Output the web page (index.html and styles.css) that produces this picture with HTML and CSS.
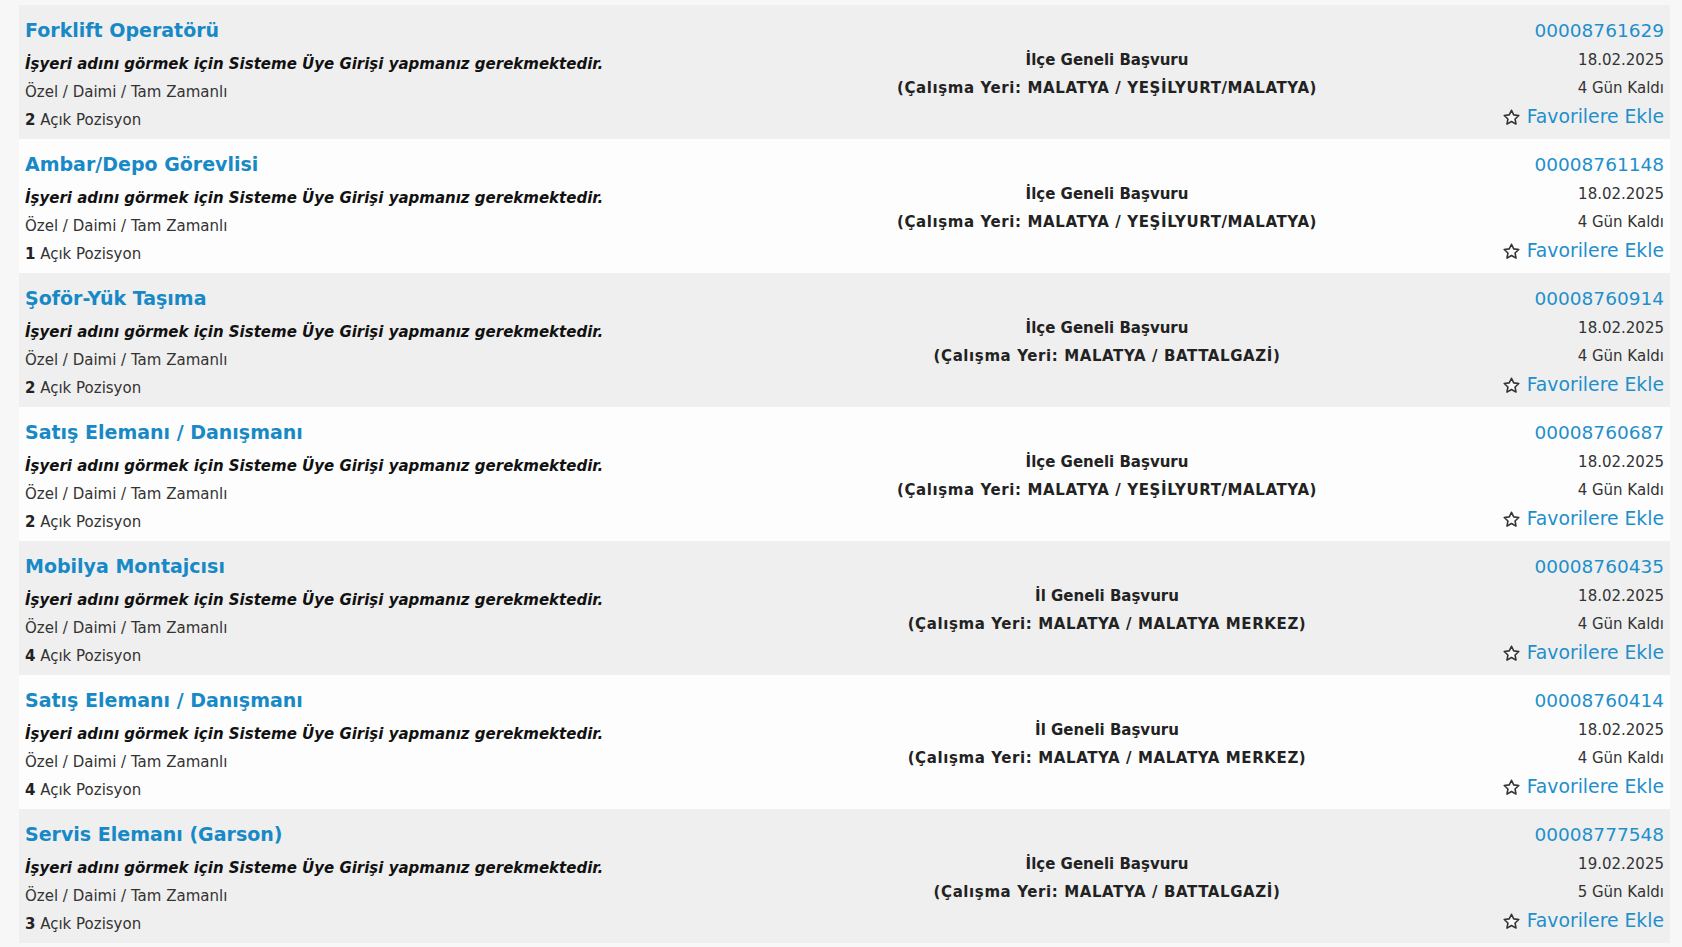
FILE: index.html
```html
<!DOCTYPE html>
<html lang="tr">
<head>
<meta charset="utf-8">
<title>İlanlar</title>
<link rel="stylesheet" href="styles.css">
</head>
<body>
<div class="list">
  <div class="row gray">
    <div class="col-left">
      <a class="title" href="#">Forklift Operatörü</a>
      <div class="employer">İşyeri adını görmek için Sisteme Üye Girişi yapmanız gerekmektedir.</div>
      <div class="type">Özel / Daimi / Tam Zamanlı</div>
      <div class="pos"><b>2</b> Açık Pozisyon</div>
    </div>
    <div class="col-mid">
      <div>İlçe Geneli Başvuru</div>
      <div class="place">(Çalışma Yeri: MALATYA / YEŞİLYURT/MALATYA)</div>
    </div>
    <div class="col-right">
      <a class="id" href="#">00008761629</a>
      <div class="date">18.02.2025</div>
      <div>4 Gün Kaldı</div>
      <a class="fav" href="#"><svg class="star" viewBox="0 0 24 24"><path d="M12 2.8l2.8 5.9 6.4.8-4.7 4.4 1.2 6.4L12 17.1l-5.7 3.2 1.2-6.4-4.7-4.4 6.4-.8z"/></svg>Favorilere Ekle</a>
    </div>
  </div>

  <div class="row">
    <div class="col-left">
      <a class="title" href="#">Ambar/Depo Görevlisi</a>
      <div class="employer">İşyeri adını görmek için Sisteme Üye Girişi yapmanız gerekmektedir.</div>
      <div class="type">Özel / Daimi / Tam Zamanlı</div>
      <div class="pos"><b>1</b> Açık Pozisyon</div>
    </div>
    <div class="col-mid">
      <div>İlçe Geneli Başvuru</div>
      <div class="place">(Çalışma Yeri: MALATYA / YEŞİLYURT/MALATYA)</div>
    </div>
    <div class="col-right">
      <a class="id" href="#">00008761148</a>
      <div class="date">18.02.2025</div>
      <div>4 Gün Kaldı</div>
      <a class="fav" href="#"><svg class="star" viewBox="0 0 24 24"><path d="M12 2.8l2.8 5.9 6.4.8-4.7 4.4 1.2 6.4L12 17.1l-5.7 3.2 1.2-6.4-4.7-4.4 6.4-.8z"/></svg>Favorilere Ekle</a>
    </div>
  </div>

  <div class="row gray">
    <div class="col-left">
      <a class="title" href="#">Şoför-Yük Taşıma</a>
      <div class="employer">İşyeri adını görmek için Sisteme Üye Girişi yapmanız gerekmektedir.</div>
      <div class="type">Özel / Daimi / Tam Zamanlı</div>
      <div class="pos"><b>2</b> Açık Pozisyon</div>
    </div>
    <div class="col-mid">
      <div>İlçe Geneli Başvuru</div>
      <div class="place">(Çalışma Yeri: MALATYA / BATTALGAZİ)</div>
    </div>
    <div class="col-right">
      <a class="id" href="#">00008760914</a>
      <div class="date">18.02.2025</div>
      <div>4 Gün Kaldı</div>
      <a class="fav" href="#"><svg class="star" viewBox="0 0 24 24"><path d="M12 2.8l2.8 5.9 6.4.8-4.7 4.4 1.2 6.4L12 17.1l-5.7 3.2 1.2-6.4-4.7-4.4 6.4-.8z"/></svg>Favorilere Ekle</a>
    </div>
  </div>

  <div class="row">
    <div class="col-left">
      <a class="title" href="#">Satış Elemanı / Danışmanı</a>
      <div class="employer">İşyeri adını görmek için Sisteme Üye Girişi yapmanız gerekmektedir.</div>
      <div class="type">Özel / Daimi / Tam Zamanlı</div>
      <div class="pos"><b>2</b> Açık Pozisyon</div>
    </div>
    <div class="col-mid">
      <div>İlçe Geneli Başvuru</div>
      <div class="place">(Çalışma Yeri: MALATYA / YEŞİLYURT/MALATYA)</div>
    </div>
    <div class="col-right">
      <a class="id" href="#">00008760687</a>
      <div class="date">18.02.2025</div>
      <div>4 Gün Kaldı</div>
      <a class="fav" href="#"><svg class="star" viewBox="0 0 24 24"><path d="M12 2.8l2.8 5.9 6.4.8-4.7 4.4 1.2 6.4L12 17.1l-5.7 3.2 1.2-6.4-4.7-4.4 6.4-.8z"/></svg>Favorilere Ekle</a>
    </div>
  </div>

  <div class="row gray">
    <div class="col-left">
      <a class="title" href="#">Mobilya Montajcısı</a>
      <div class="employer">İşyeri adını görmek için Sisteme Üye Girişi yapmanız gerekmektedir.</div>
      <div class="type">Özel / Daimi / Tam Zamanlı</div>
      <div class="pos"><b>4</b> Açık Pozisyon</div>
    </div>
    <div class="col-mid">
      <div>İl Geneli Başvuru</div>
      <div class="place">(Çalışma Yeri: MALATYA / MALATYA MERKEZ)</div>
    </div>
    <div class="col-right">
      <a class="id" href="#">00008760435</a>
      <div class="date">18.02.2025</div>
      <div>4 Gün Kaldı</div>
      <a class="fav" href="#"><svg class="star" viewBox="0 0 24 24"><path d="M12 2.8l2.8 5.9 6.4.8-4.7 4.4 1.2 6.4L12 17.1l-5.7 3.2 1.2-6.4-4.7-4.4 6.4-.8z"/></svg>Favorilere Ekle</a>
    </div>
  </div>

  <div class="row">
    <div class="col-left">
      <a class="title" href="#">Satış Elemanı / Danışmanı</a>
      <div class="employer">İşyeri adını görmek için Sisteme Üye Girişi yapmanız gerekmektedir.</div>
      <div class="type">Özel / Daimi / Tam Zamanlı</div>
      <div class="pos"><b>4</b> Açık Pozisyon</div>
    </div>
    <div class="col-mid">
      <div>İl Geneli Başvuru</div>
      <div class="place">(Çalışma Yeri: MALATYA / MALATYA MERKEZ)</div>
    </div>
    <div class="col-right">
      <a class="id" href="#">00008760414</a>
      <div class="date">18.02.2025</div>
      <div>4 Gün Kaldı</div>
      <a class="fav" href="#"><svg class="star" viewBox="0 0 24 24"><path d="M12 2.8l2.8 5.9 6.4.8-4.7 4.4 1.2 6.4L12 17.1l-5.7 3.2 1.2-6.4-4.7-4.4 6.4-.8z"/></svg>Favorilere Ekle</a>
    </div>
  </div>

  <div class="row gray">
    <div class="col-left">
      <a class="title" href="#">Servis Elemanı (Garson)</a>
      <div class="employer">İşyeri adını görmek için Sisteme Üye Girişi yapmanız gerekmektedir.</div>
      <div class="type">Özel / Daimi / Tam Zamanlı</div>
      <div class="pos"><b>3</b> Açık Pozisyon</div>
    </div>
    <div class="col-mid">
      <div>İlçe Geneli Başvuru</div>
      <div class="place">(Çalışma Yeri: MALATYA / BATTALGAZİ)</div>
    </div>
    <div class="col-right">
      <a class="id" href="#">00008777548</a>
      <div class="date">19.02.2025</div>
      <div>5 Gün Kaldı</div>
      <a class="fav" href="#"><svg class="star" viewBox="0 0 24 24"><path d="M12 2.8l2.8 5.9 6.4.8-4.7 4.4 1.2 6.4L12 17.1l-5.7 3.2 1.2-6.4-4.7-4.4 6.4-.8z"/></svg>Favorilere Ekle</a>
    </div>
  </div>
</div>
</body>
</html>
```

FILE: styles.css
```css
html, body {
  margin: 0;
  padding: 0;
}
body {
  background: #f7f7f7;
  font-family: "DejaVu Sans", Verdana, sans-serif;
  color: #222;
  font-size: 15px;
}
.list {
  padding: 5px 12px 4px 19px;
  display: flex;
  flex-direction: column;
}
.row {
  display: grid;
  grid-template-columns: 825px 526px 1fr;
  height: 134px;
  box-sizing: border-box;
  background: #fdfdfd;
}
.row.gray {
  background: #efefef;
}
a {
  text-decoration: none;
}
.col-left {
  padding: 11px 0 0 6px;
  display: flex;
  flex-direction: column;
}
.title {
  color: #1789c6;
  font-weight: bold;
  font-size: 19px;
  line-height: 28px;
}
.employer {
  margin-top: 6px;
  font-weight: bold;
  font-style: italic;
  color: #111;
  line-height: 28px;
}
.type, .pos {
  line-height: 28px;
  color: #333;
}
.pos b {
  color: #222;
}
.col-mid {
  align-self: center;
  padding-top: 4px;
  text-align: center;
  font-weight: bold;
  line-height: 28px;
  color: #222;
}
.place {
  letter-spacing: 0.6px;
}
.col-right {
  padding: 12px 6px 0 0;
  display: flex;
  flex-direction: column;
  align-items: flex-end;
  line-height: 28px;
  color: #333;
}
.date {
  margin-top: 1px;
}
.id {
  color: #1f8fcc;
  font-size: 18.5px;
}
.fav {
  margin-top: 1px;
  color: #1f8fcc;
  font-size: 18.8px;
  display: flex;
  align-items: center;
  gap: 6px;
}
.star {
  width: 19px;
  height: 19px;
  fill: #fafafa;
  stroke: #333;
  stroke-width: 2;
  stroke-linejoin: round;
}
```
